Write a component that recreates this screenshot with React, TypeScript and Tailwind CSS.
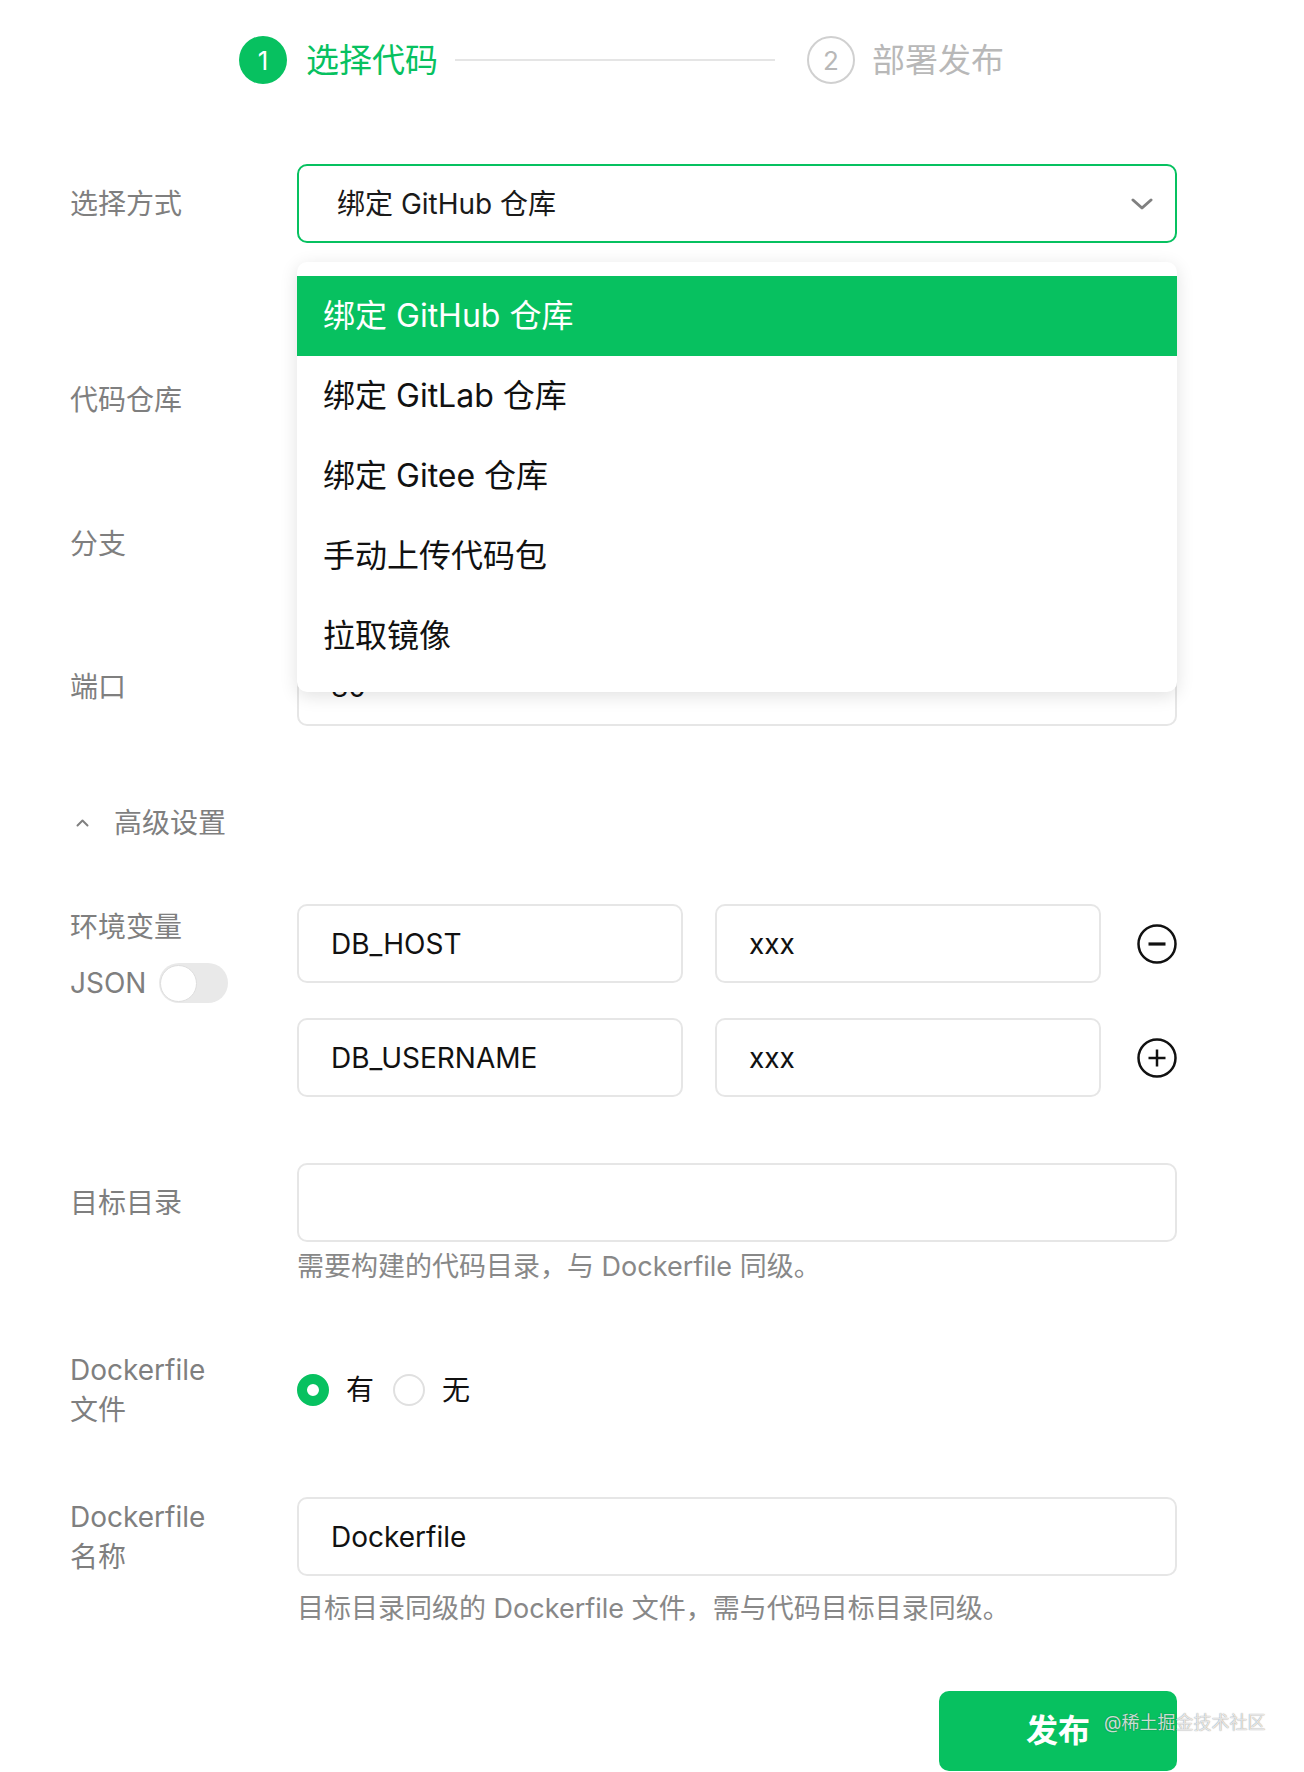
import React from "react";

const Label = ({ children, className = "" }: { children: React.ReactNode; className?: string }) => (
  <div className={`w-[227px] shrink-0 text-[28px] leading-[40px] text-[#7f7f7f] ${className}`}>{children}</div>
);

const Input = ({ value = "", className = "" }: { value?: string; className?: string }) => (
  <div
    className={`h-[79px] border-2 border-[#e6e6e6] rounded-[10px] bg-white flex items-center pl-[32px] text-[28px] text-[#111] ${className}`}
  >
    {value}
  </div>
);

const CircleIcon = ({ plus }: { plus?: boolean }) => (
  <svg width="40" height="40" viewBox="0 0 40 40" className="shrink-0">
    <circle cx="20" cy="20" r="18.5" fill="none" stroke="#111" strokeWidth="2.5" />
    <line x1="11.5" y1="20" x2="28.5" y2="20" stroke="#111" strokeWidth={plus ? 2.5 : 3.2} />
    {plus && <line x1="20" y1="11.5" x2="20" y2="28.5" stroke="#111" strokeWidth="2.5" />}
  </svg>
);

const options = ["绑定 GitHub 仓库", "绑定 GitLab 仓库", "绑定 Gitee 仓库", "手动上传代码包", "拉取镜像"];

export default function App() {
  return (
    <div className="relative w-[1304px] h-[1772px] bg-white overflow-hidden font-['Inter','Noto_Sans_CJK_SC',sans-serif]">
      {/* Stepper */}
      <div className="flex items-center pl-[239px] pt-[36px]">
        <div className="w-[48px] h-[48px] rounded-full bg-[#07c160] text-white text-[26px] flex items-center justify-center">
          1
        </div>
        <div className="ml-[19px] text-[33px] leading-[48px] text-[#07c160]">选择代码</div>
        <div className="ml-[17px] w-[320px] h-[2px] bg-[#e5e5e5]" />
        <div className="ml-[32px] w-[48px] h-[48px] rounded-full border-2 border-[#d0d0d0] text-[#b8b8b8] text-[26px] flex items-center justify-center">
          2
        </div>
        <div className="ml-[17px] text-[33px] leading-[48px] text-[#b8b8b8]">部署发布</div>
      </div>

      <div className="pl-[70px] mt-[80px]">
        {/* 选择方式 */}
        <div className="flex items-center">
          <Label>选择方式</Label>
          <div className="relative w-[880px] h-[79px] border-2 border-[#07c160] rounded-[10px] flex items-center justify-between pl-[38px] pr-[22px]">
            <span className="text-[28px] text-[#1a1a1a]">绑定 GitHub 仓库</span>
            <svg width="22" height="14" viewBox="0 0 22 14">
              <polyline points="2,3 11,11 20,3" fill="none" stroke="#808080" strokeWidth="3" strokeLinecap="round" strokeLinejoin="round" />
            </svg>
            <div className="absolute z-10 left-[-2px] top-[96px] w-[880px] bg-white rounded-[10px] shadow-[0_4px_18px_rgba(0,0,0,0.12)] pt-[14px] pb-[16px]">
              {options.map((o, i) => (
                <div
                  key={o}
                  className={`h-[80px] flex items-center pl-[26px] text-[32px] ${
                    i === 0 ? "bg-[#07c160] text-white" : "text-[#111]"
                  }`}
                >
                  {o}
                </div>
              ))}
            </div>
          </div>
        </div>

        {/* 代码仓库 */}
        <div className="flex items-center mt-[117px]">
          <Label>代码仓库</Label>
          <Input className="w-[880px]" />
        </div>

        {/* 分支 */}
        <div className="flex items-center mt-[65px]">
          <Label>分支</Label>
          <Input className="w-[880px]" />
        </div>

        {/* 端口 */}
        <div className="flex items-center mt-[64px]">
          <Label>端口</Label>
          <Input className="w-[880px]" value="80" />
        </div>

        {/* 高级设置 */}
        <div className="flex items-center mt-[77px] pl-[6px] text-[28px] leading-[40px] text-[#7f7f7f]">
          <svg width="13" height="8" viewBox="0 0 13 8">
            <polyline points="1.5,6.5 6.5,1.5 11.5,6.5" fill="none" stroke="#808080" strokeWidth="2" strokeLinecap="round" strokeLinejoin="round" />
          </svg>
          <span className="ml-[25px]">高级设置</span>
        </div>

        {/* 环境变量 */}
        <div className="flex items-start mt-[61px]">
          <div className="w-[227px] shrink-0 pt-[3px]">
            <div className="text-[28px] leading-[40px] text-[#7f7f7f]">环境变量</div>
            <div className="flex items-center mt-[16px] h-[40px]">
              <span className="text-[28px] leading-[40px] text-[#7f7f7f]">JSON</span>
              <div className="ml-[13px] w-[69px] h-[40px] rounded-full bg-[#e9e9e9] flex items-center pl-[1px]">
                <div className="w-[37px] h-[37px] rounded-full bg-white border border-[#dedede]" />
              </div>
            </div>
          </div>
          <div className="flex flex-col gap-[35px]">
            <div className="flex items-center">
              <Input className="w-[386px]" value="DB_HOST" />
              <Input className="w-[386px] ml-[32px]" value="xxx" />
              <div className="ml-[36px]">
                <CircleIcon />
              </div>
            </div>
            <div className="flex items-center">
              <Input className="w-[386px]" value="DB_USERNAME" />
              <Input className="w-[386px] ml-[32px]" value="xxx" />
              <div className="ml-[36px]">
                <CircleIcon plus />
              </div>
            </div>
          </div>
        </div>

        {/* 目标目录 */}
        <div className="flex items-center mt-[66px]">
          <Label>目标目录</Label>
          <Input className="w-[880px]" />
        </div>
        <div className="flex">
          <div className="w-[227px] shrink-0" />
          <div className="mt-[5px] text-[27px] leading-[40px] text-[#888]">需要构建的代码目录，与 Dockerfile 同级。</div>
        </div>

        {/* Dockerfile 文件 */}
        <div className="flex items-center mt-[63px]">
          <Label>
            <div>Dockerfile</div>
            <div>文件</div>
          </Label>
          <div className="flex items-center text-[28px] text-[#111]">
            <div className="w-[32px] h-[32px] rounded-full border-[10px] border-[#07c160] bg-white" />
            <span className="ml-[17px]">有</span>
            <div className="ml-[19px] w-[32px] h-[32px] rounded-full border-2 border-[#e0e0e0] bg-white" />
            <span className="ml-[17px]">无</span>
          </div>
        </div>

        {/* Dockerfile 名称 */}
        <div className="flex items-start mt-[67px]">
          <Label>
            <div>Dockerfile</div>
            <div>名称</div>
          </Label>
          <Input className="w-[880px]" value="Dockerfile" />
        </div>
        <div className="flex">
          <div className="w-[227px] shrink-0" />
          <div className="mt-[12px] text-[27px] leading-[40px] text-[#888]">
            目标目录同级的 Dockerfile 文件，需与代码目标目录同级。
          </div>
        </div>

        {/* 发布 */}
        <div className="flex justify-end w-[1107px] mt-[62px]">
          <button className="w-[238px] h-[80px] rounded-[10px] bg-[#07c160] text-white text-[32px] font-bold flex items-center justify-center">
            发布
          </button>
        </div>
      </div>

      <div className="absolute left-[1104px] top-[1710px] text-[18px] leading-[26px] text-[rgba(255,255,255,0.8)] [text-shadow:0_0_1px_rgba(0,0,0,0.55)]">
        @稀土掘金技术社区
      </div>
    </div>
  );
}
